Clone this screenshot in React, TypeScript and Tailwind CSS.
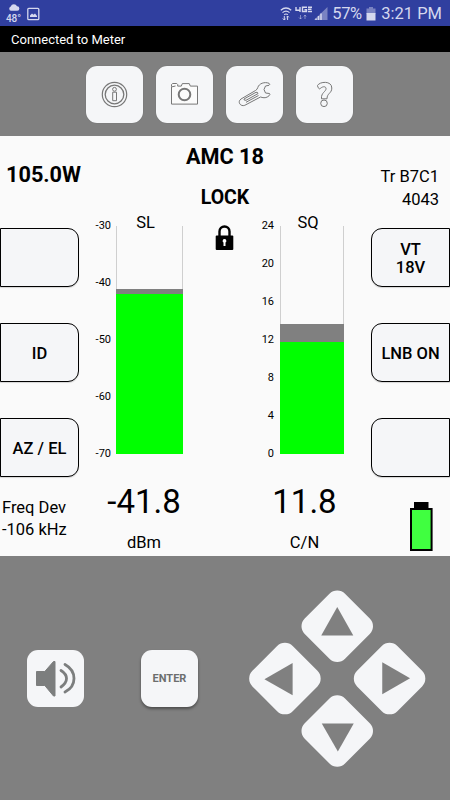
import React from "react";

const tools = [
  {
    name: "Info",
    icon: (
      <>
        <circle cx="28.5" cy="28.5" r="12.2" strokeWidth="1.2" />
        <circle cx="28.5" cy="28.5" r="9.3" strokeWidth="1.3" />
        <circle cx="28.5" cy="23.3" r="1.9" />
        <path d="M26.7 26.2h3.8v8.5h-3.8z" />
      </>
    ),
  },
  {
    name: "Camera",
    icon: (
      <>
        <path
          fill="#fbfbfb"
          d="M15.5 20.5v-2l1.2-1h4l1 1v1.6h3.6l1-2.5h7l1 2.5h7.2v18H15.5z"
        />
        <path d="M16 20.8l3.5-.8" />
        <circle cx="28.5" cy="28.5" r="5.8" strokeWidth="2" />
      </>
    ),
  },
  {
    name: "Settings",
    icon: (
      <>
        <path d="M15 33L29.5 24.5Q31.3 23.5 31.8 21.5C33 17.5 38.5 15.5 43 17.3Q44.5 18.3 43 19.3L39.5 20Q36.5 23.5 39.5 27L43.5 27.5Q44.5 28.5 43 29.8C40.5 32 38 32.3 34.5 31L18.8 39.3C14.5 41 11 35.8 15 33Z" />
        <path d="M18 33L30 26.3Q32 26 32 27.6L20 34.3M20 34.3Q17.5 34.5 18 33M20 36.3L32.5 29.5" />
      </>
    ),
  },
  {
    name: "Help",
    icon: (
      <>
        <path d="M21.5 19.5C23.5 15.5 35.8 14.3 35.8 22C35.8 27.5 31 27 31 32.8H25.5C24.8 26.5 30.5 25.5 30 22.3C29.5 19.8 26 20.5 23.8 23Q21.5 22 21.5 19.5Z" />
        <circle cx="28" cy="37.3" r="3.3" />
      </>
    ),
  },
];

// triangle points around the key's centre, in d-pad grid order
const arrows = [
  { name: "Up", points: "0,-19 16,9.5 -16,9.5" },
  { name: "Right", points: "-7.3,-16 -7.3,16 20.5,0" },
  { name: "Left", points: "7.7,-15.3 7.7,17 -20.5,1" },
  { name: "Down", points: "-15.5,-7 16.5,-7 .6,21" },
];

function StatusBar() {
  return (
    <div className="flex h-[26px] items-center justify-between bg-[#303f9f] pr-2 pl-[6px] text-[#d5d8ee]">
      <div className="flex items-center gap-[6px]">
        <div className="flex w-[15px] flex-col items-center pt-[2px]">
          <svg width="12" height="7" viewBox="0 0 12 7" fill="currentColor">
            <path d="M3 6.8a2.3 2.3 0 0 1-.3-4.4A3.4 3.4 0 0 1 9 2.3a2.2 2.2 0 0 1 .2 4.5z" />
          </svg>
          <span className="pt-[2px] text-[10px] leading-[11px] font-medium">48°</span>
        </div>
        <svg className="mt-px" width="13" height="14" viewBox="0 0 13 14" fill="none">
          <rect x=".8" y="1.3" width="11" height="11.4" rx="1" stroke="currentColor" strokeWidth="1.3" />
          <path d="M3 10V8.5L5 6.5l1.5 1.3L8 6.5l2 2.5v1z" fill="currentColor" />
        </svg>
      </div>
      <div className="flex items-center pt-[2px]">
        <svg width="49" height="16" viewBox="0 0 49 16" fill="none" stroke="currentColor" strokeWidth="1.2">
          <path d="M.8 4.3q5.2-4.6 10.4 0M2.5 6.6q3.5-3 7 0M4.2 8.7q1.8-1.4 3.6 0" />
          <path d="M4.3 10v4M2.8 12.5l1.5 1.5 1.5-1.5M7.6 14v-4M6.5 11.3l1.1-1.3 1.2 1.3" strokeWidth="1" />
          <path d="M16 1v3.3h4.5M20 1v5M27 1.2h-4.5v4.3h4V3.8h-2M28 1.2h4M28 3.3h3.5M28 5.5h4" strokeWidth="1.4" />
          <path d="M20.5 9v4M19 11.5l1.5 1.5 1.5-1.5M25 13V9M23.8 10.5L25 9l1.2 1.5" opacity=".5" strokeWidth="1" />
          <path d="M34 14L47.5 1v13z" fill="currentColor" stroke="none" opacity=".45" />
          <path d="M36 14v-1.5M38.5 14v-4M41 14V7.5" strokeWidth="1.5" />
        </svg>
        <span className="ml-[3px] w-[30px] text-[16.5px] leading-[24px] tracking-[-0.4px]">57%</span>
        <svg className="ml-[4px]" width="10" height="14" viewBox="0 0 10 14" fill="currentColor">
          <path d="M3 0h4v1.5h2.5V7H.5V1.5H3z" opacity=".45" />
          <path d="M.5 6h9v7.5h-9z" />
        </svg>
        <span className="ml-[5px] text-[16.5px] leading-[24px] whitespace-nowrap">3:21 PM</span>
      </div>
    </div>
  );
}

function SideButton({ side, children }: { side: "left" | "right"; children?: React.ReactNode }) {
  return (
    <button
      className={
        "flex h-[59px] w-[79px] items-center justify-center border border-black bg-[#f5f6f8] pt-[2px] text-center text-[16.5px] leading-[18px] font-medium shadow-[0_1px_1px_rgba(0,0,0,0.15)] " +
        (side === "left" ? "rounded-r-[11px]" : "rounded-l-[11px]")
      }
    >
      {children}
    </button>
  );
}

function Scale({ labels }: { labels: string[] }) {
  return (
    <div className="flex h-[240px] flex-col justify-between text-right text-[11px] leading-[12px]">
      {labels.map((label) => (
        <span key={label}>{label}</span>
      ))}
    </div>
  );
}

function Meter({ name, peak, level }: { name: string; peak: number; level: number }) {
  return (
    <div className="relative mt-[6px] flex h-[228px] flex-col justify-end border-x border-[#cfcfcf]">
      <span className="absolute -top-[14px] right-0 left-[-8px] text-center text-[16.5px] leading-[21px]">
        {name}
      </span>
      <div className="-mx-px bg-[#808080]" style={{ height: peak - level }} />
      <div className="-mx-px bg-[#00ff00]" style={{ height: level }} />
    </div>
  );
}

function Readings() {
  return (
    <section className="h-[420px] bg-[#fafafa]">
      <div className="grid h-[84px] grid-cols-[150px_150px_150px]">
        <div className="pt-[27px] pl-[6px] text-[21.7px] leading-[24px] font-bold">105.0W</div>
        <div className="pt-[7px] text-center font-bold">
          <div className="text-[21.7px] leading-[27px]">AMC 18</div>
          <div className="pt-[15px] text-[19.5px] leading-[26px]">LOCK</div>
        </div>
        <div className="pt-[29px] pr-[11px] text-right text-[16.5px] leading-[23px]">
          <div>Tr B7C1</div>
          <div>4043</div>
        </div>
      </div>
      <div className="flex h-[258px] justify-between">
        <div className="flex flex-col gap-[36px] pt-[8px]">
          <SideButton side="left" />
          <SideButton side="left">ID</SideButton>
          <SideButton side="left">AZ / EL</SideButton>
        </div>
        <div className="grid flex-1 grid-cols-[32px_5px_67px_32px_19px_40px_6px_64px]">
          <Scale labels={["-30", "-40", "-50", "-60", "-70"]} />
          <span />
          <Meter name="SL" peak={165} level={160.5} />
          <span />
          <svg className="mt-[5px]" width="19" height="26" viewBox="0 0 19 26">
            <path d="M4.5 12V6.5a5 5 0 0 1 10 0V12" fill="none" stroke="#000" strokeWidth="2.4" />
            <rect x=".7" y="10.5" width="17.6" height="14.5" rx="1" />
            <path d="M9.5 14a1.9 1.9 0 0 1 1 3.5v3.5h-2v-3.5a1.9 1.9 0 0 1 1-3.5z" fill="#fff" />
          </svg>
          <Scale labels={["24", "20", "16", "12", "8", "4", "0"]} />
          <span />
          <Meter name="SQ" peak={130} level={112.5} />
        </div>
        <div className="flex flex-col gap-[36px] pt-[8px]">
          <SideButton side="right">
            VT
            <br />
            18V
          </SideButton>
          <SideButton side="right">LNB ON</SideButton>
          <SideButton side="right" />
        </div>
      </div>
      <div className="grid h-[78px] grid-cols-[84px_120px_201px_45px]">
        <div className="pt-[19px] pl-[2px] text-[16.5px] leading-[22px] whitespace-nowrap">
          <div>Freq Dev</div>
          <div>-106 kHz</div>
        </div>
        <div className="pt-[3px] text-center">
          <div className="text-[33px] leading-[41px]">-41.8</div>
          <div className="pt-[10px] text-[16.5px] leading-[22px]">dBm</div>
        </div>
        <div className="pt-[3px] text-center">
          <div className="text-[33px] leading-[41px]">11.8</div>
          <div className="pt-[10px] text-[16.5px] leading-[22px]">C/N</div>
        </div>
        <svg className="mt-[23px] ml-[5px]" width="23" height="50" viewBox="0 0 23 50">
          <rect x="4" y="1" width="14.5" height="7" />
          <rect x="1" y="8" width="20.6" height="41" fill="#40ff40" stroke="#000" strokeWidth="2" />
        </svg>
      </div>
    </section>
  );
}

export default function App() {
  return (
    <main className="h-[800px] w-[450px] overflow-hidden bg-[#808080] font-['Roboto',sans-serif] text-black">
      <StatusBar />
      <div className="h-[26px] bg-black pl-[11px] text-[13px] leading-[28px] text-white">
        Connected to Meter
      </div>
      <nav className="flex h-[84px] justify-center gap-[13px] pt-[14px] pr-[11px]">
        {tools.map((tool) => (
          <button
            key={tool.name}
            aria-label={tool.name}
            className="size-[57px] rounded-[11px] bg-[#f5f6f8] shadow-[0_0_1px_rgba(0,0,0,0.3)]"
          >
            <svg width="57" height="57" viewBox="0 0 57 57" fill="none" stroke="#777" strokeWidth="1">
              {tool.icon}
            </svg>
          </button>
        ))}
      </nav>
      <Readings />
      <section className="flex h-[244px] items-center pl-[27px]">
        <button aria-label="Volume" className="size-[57px] rounded-[11px] bg-[#f5f6f8]">
          <svg width="57" height="57" viewBox="0 0 57 57" fill="none">
            <path d="M9.5 21.5h8.3L26.5 11.5h1.5v34.5h-1.5L17.8 35.5H9.5z" fill="#7c7e7e" stroke="#7c7e7e" strokeLinejoin="round" />
            <path d="M34 20.5q5.5 3.5 5.5 8t-5.5 8.500M38 14.5q9 5 9 14t-9 13.5" stroke="#7c7e7e" strokeWidth="2.8" strokeLinecap="round" />
          </svg>
        </button>
        <button className="ml-[57px] size-[57px] rounded-[11px] bg-[#f5f6f8] pt-[2px] text-[11px] font-bold text-[#6c6e6e] shadow-[0_2px_3px_rgba(0,0,0,0.4)]">
          ENTER
        </button>
        <div className="ml-[74px] grid rotate-45 grid-cols-2 gap-[17.5px]">
          {arrows.map((arrow) => (
            <button
              key={arrow.name}
              aria-label={arrow.name}
              className="size-[56.5px] rounded-[11px] bg-[#f5f6f8]"
            >
              <svg className="-rotate-45" width="56.5" height="56.5" viewBox="-28.25 -28.25 56.5 56.5">
                <polygon points={arrow.points} fill="#808080" />
              </svg>
            </button>
          ))}
        </div>
      </section>
    </main>
  );
}
